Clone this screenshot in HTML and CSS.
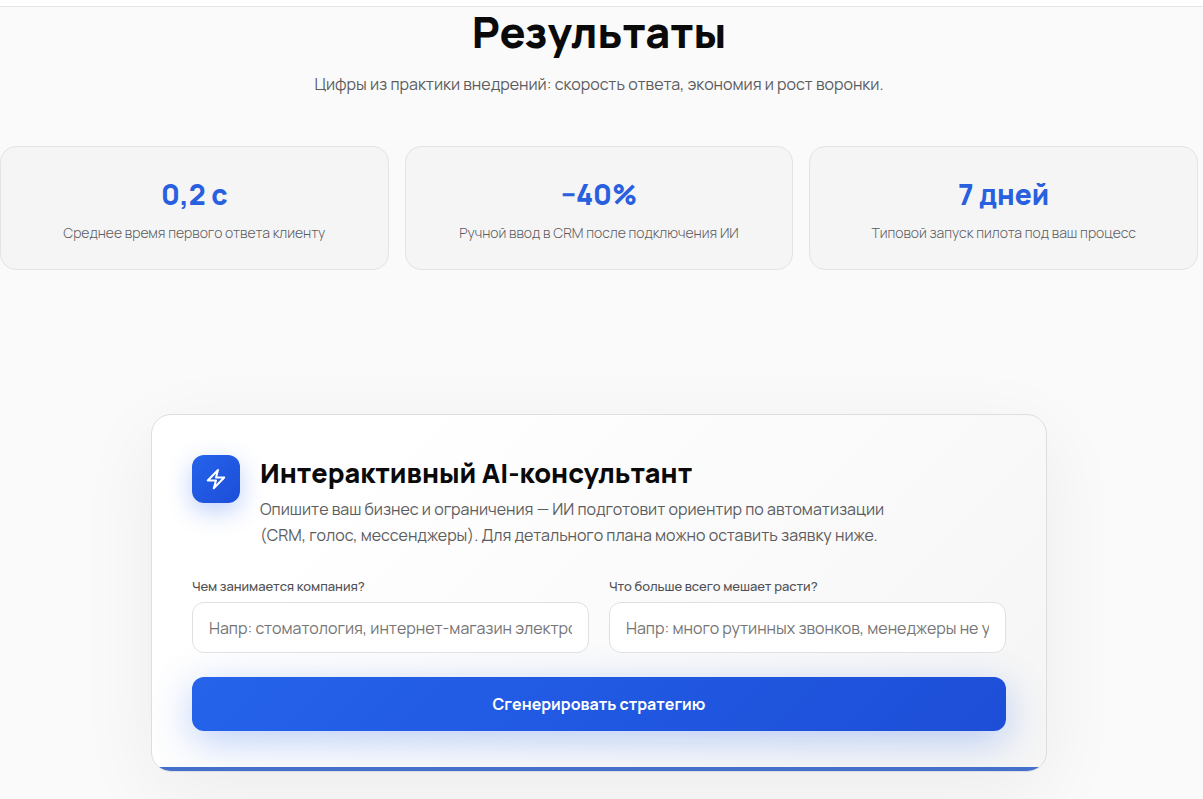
FILE: index.html
```html
<!DOCTYPE html>
<html lang="ru">
<head>
    <meta charset="UTF-8">
    <meta name="viewport" content="width=device-width, initial-scale=1.0">
    <title>Результаты</title>
    <link rel="stylesheet" href="styles.css">
</head>
<body>
    <header class="topbar"></header>

    <main class="page">
        <section class="results">
            <h1>Результаты</h1>
            <p class="lead">Цифры из практики внедрений: скорость ответа, экономия и рост воронки.</p>

            <div class="stats">
                <div class="stat">
                    <strong>0,2 с</strong>
                    <span>Среднее время первого ответа клиенту</span>
                </div>
                <div class="stat">
                    <strong>−40%</strong>
                    <span>Ручной ввод в CRM после подключения ИИ</span>
                </div>
                <div class="stat">
                    <strong>7 дней</strong>
                    <span>Типовой запуск пилота под ваш процесс</span>
                </div>
            </div>
        </section>

        <section class="consultant">
            <div class="consultant-head">
                <div class="icon">
                    <svg width="24" height="24" viewBox="0 0 24 24" fill="none" stroke="currentColor" stroke-width="2" stroke-linecap="round" stroke-linejoin="round" aria-hidden="true">
                        <path d="M3.75 13.5 14 3 12 10.5h8.25L9.75 21.25 12 13.5z"/>
                    </svg>
                </div>
                <div class="intro">
                    <h2>Интерактивный AI-консультант</h2>
                    <p>Опишите ваш бизнес и ограничения — ИИ подготовит ориентир по автоматизации (CRM, голос, мессенджеры). Для детального плана можно оставить заявку ниже.</p>
                </div>
            </div>

            <form id="strategy-form">
                <div class="fields">
                    <div class="field">
                        <label for="company">Чем занимается компания?</label>
                        <input type="text" id="company" name="company" placeholder="Напр: стоматология, интернет-магазин электроники">
                    </div>
                    <div class="field">
                        <label for="problem">Что больше всего мешает расти?</label>
                        <input type="text" id="problem" name="problem" placeholder="Напр: много рутинных звонков, менеджеры не успевают">
                    </div>
                </div>
                <button type="submit">Сгенерировать стратегию</button>
            </form>
        </section>
    </main>
</body>
</html>
```

FILE: styles.css
```css
* {
    box-sizing: border-box;
}
body {
    margin: 0;
    background: #fafafa;
    color: #0a0a0a;
    font-family: Manrope, Inter, "Noto Sans", sans-serif;
    font-size: 16px;
}
h1, h2, p {
    margin: 0;
}
.topbar {
    height: 7px;
    background: #fff;
    border-bottom: 1px solid #e4e4e7;
}
.page {
    padding-right: 5px;
}
.results {
    text-align: center;
}
h1 {
    font-size: 43px;
    font-weight: 800;
    line-height: 50px;
}
.lead {
    margin-top: 13px;
    color: #5c5c5f;
    font-size: 16px;
    font-weight: 400;
    line-height: 28px;
}
.stats {
    display: grid;
    grid-template-columns: repeat(3, 1fr);
    gap: 16px;
    margin-top: 48px;
}
.stat {
    padding: 27px 24px 25px;
    background: #f5f5f5;
    border: 1px solid #e4e4e5;
    border-radius: 16px;
}
.stat strong {
    display: block;
    color: #2860e0;
    font-size: 28px;
    font-weight: 800;
    line-height: 40px;
}
.stat span {
    display: block;
    margin-top: 8px;
    color: #5c5c5f;
    font-size: 14px;
    font-weight: 300;
    line-height: 22px;
}
.consultant {
    position: relative;
    max-width: 896px;
    margin: 144px auto 40px;
    padding: 40px;
    background: linear-gradient(135deg, #fff 0%, #fff 20%, #f5f5f5 100%);
    border: 1px solid #dededf;
    border-radius: 20px;
    box-shadow: 0 20px 80px rgba(0, 0, 0, 0.06);
    overflow: hidden;
}
.consultant::after {
    content: "";
    position: absolute;
    left: 0;
    right: 0;
    bottom: 0;
    height: 4px;
    background: #446fca;
}
.consultant-head {
    display: flex;
    gap: 20px;
}
.icon {
    display: flex;
    align-items: center;
    justify-content: center;
    flex: none;
    width: 48px;
    height: 48px;
    background: linear-gradient(135deg, #2563eb, #1d4ed8);
    border-radius: 12px;
    color: #fff;
    box-shadow: 0 8px 24px rgba(37, 99, 235, 0.3);
}
.intro {
    max-width: 660px;
}
h2 {
    font-size: 27px;
    font-weight: 800;
    line-height: 35px;
}
.intro p {
    margin-top: 6px;
    color: #5c5c5f;
    font-size: 16px;
    font-weight: 400;
    line-height: 26px;
}
.fields {
    display: grid;
    grid-template-columns: 1fr 1fr;
    gap: 20px;
    margin-top: 28px;
}
.field label {
    display: block;
    margin-bottom: 6px;
    color: #505053;
    font-size: 13px;
    font-weight: 500;
    line-height: 20px;
}
.field input {
    display: block;
    width: 100%;
    height: 51px;
    padding: 0 16px;
    background: #fff;
    border: 1px solid #e0e0e2;
    border-radius: 12px;
    font-family: inherit;
    font-size: 16px;
    font-weight: 400;
}
.field input::placeholder {
    color: #757575;
}
button {
    display: block;
    width: 100%;
    height: 54px;
    margin-top: 24px;
    background: linear-gradient(135deg, #2563eb, #1d4ed8);
    border: none;
    border-radius: 12px;
    color: #fff;
    font-family: inherit;
    font-size: 16px;
    font-weight: 700;
    box-shadow: 0 10px 40px rgba(37, 99, 235, 0.3);
    cursor: pointer;
}
```
